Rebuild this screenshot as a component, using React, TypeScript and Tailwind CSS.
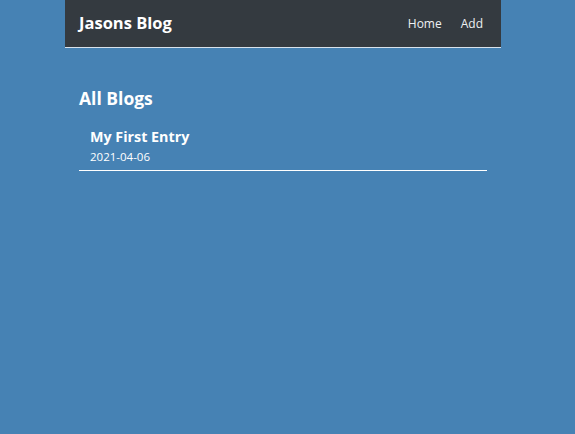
const blogs = [{ id: 1, title: 'My First Entry', date: '2021-04-06' }];

export default function App() {
  return (
    <div className="min-h-[434px] bg-[#4682b4] text-white" style={{ fontFamily: '"Open Sans", sans-serif' }}>
      <div className="ml-[65px] w-[436px]">
        <nav className="flex h-[48px] items-center justify-between border-b border-[#d8e2ec] bg-[#343a40] pl-[14px] pr-[18px]">
          <h1 className="text-[16.5px] font-bold">Jasons Blog</h1>
          <div className="flex gap-[19px] text-[12px] text-[#eef0f2]">
            <a href="#">Home</a>
            <a href="#">Add</a>
          </div>
        </nav>
        <div className="px-[14px] pt-[37px]">
          <h2 className="text-[17.5px] font-bold">All Blogs</h2>
          {blogs.map((b) => (
            <div key={b.id} className="mt-[16px] border-b border-white pb-[3px] pl-[11px]">
              <h3 className="text-[14.3px] font-bold leading-[20px]">{b.title}</h3>
              <p className="text-[11.5px] leading-[20px]">{b.date}</p>
            </div>
          ))}
        </div>
      </div>
    </div>
  );
}
